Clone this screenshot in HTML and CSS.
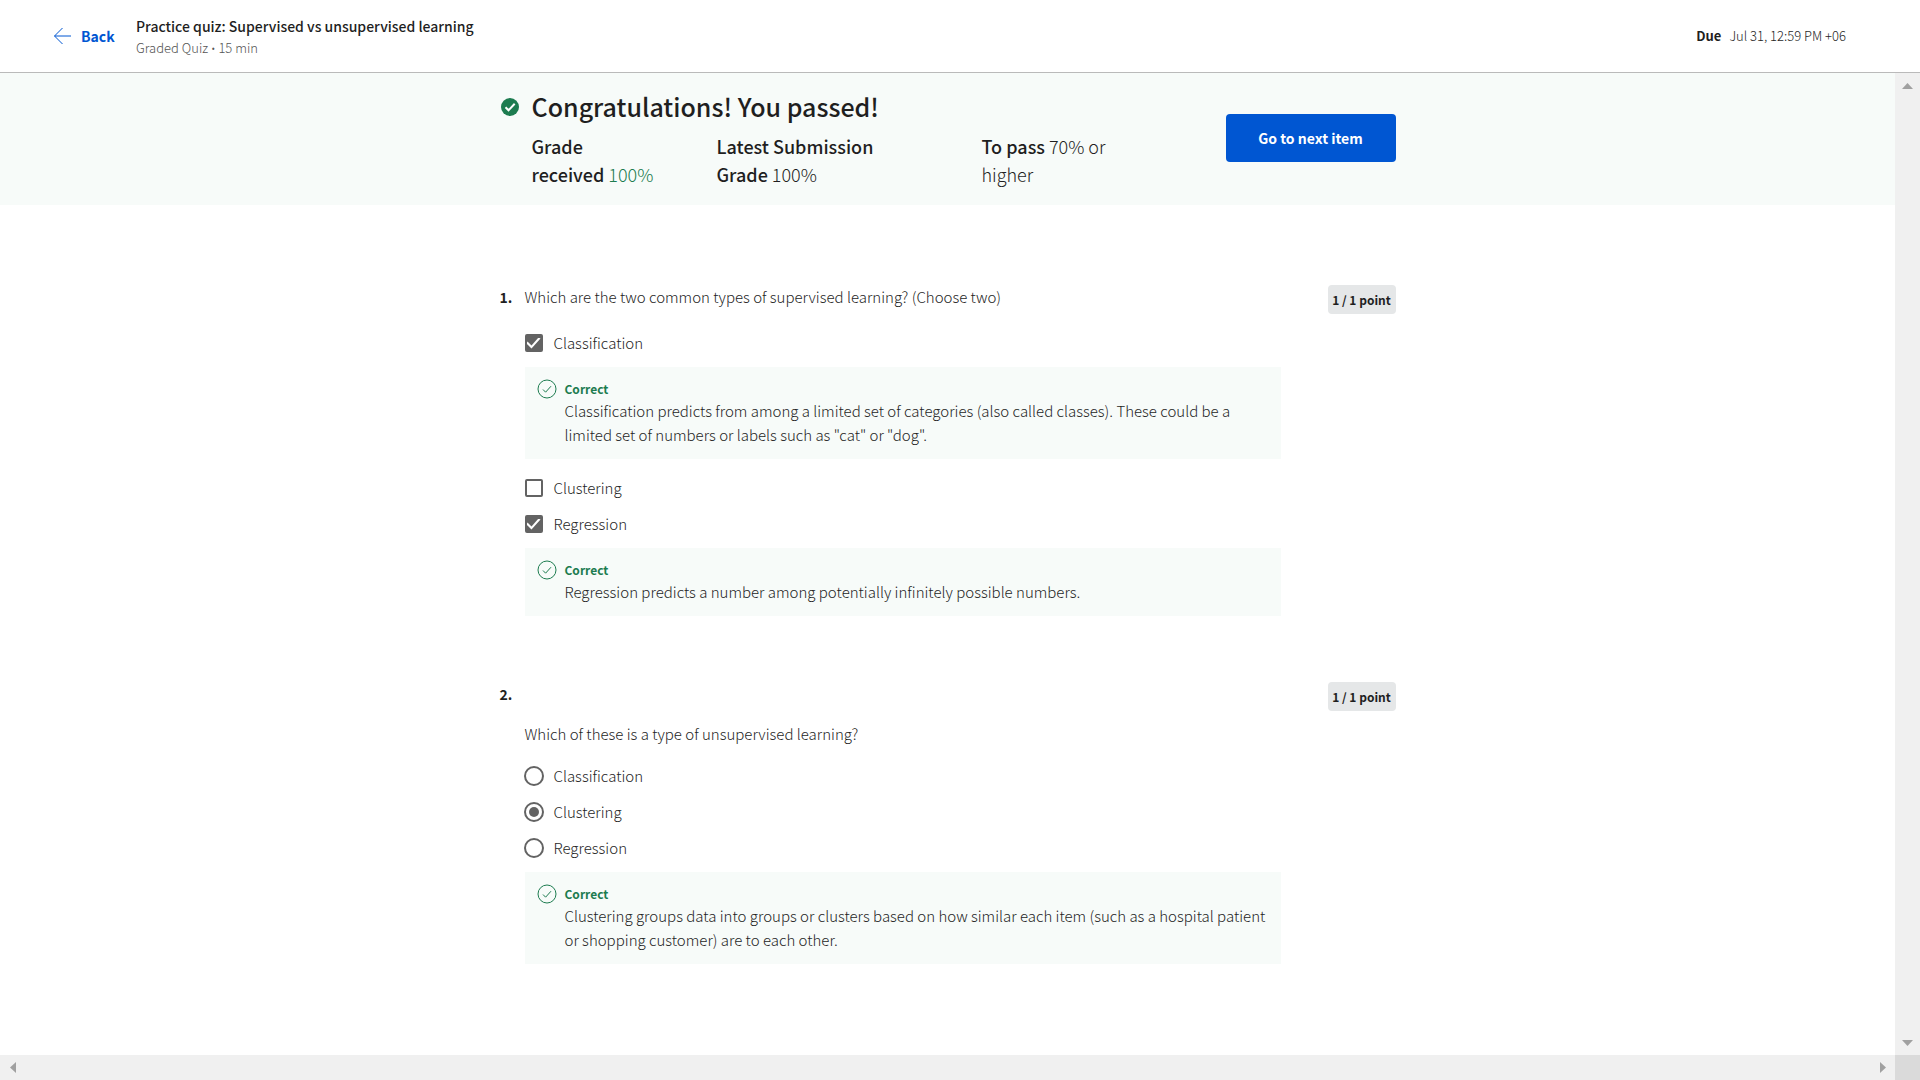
FILE: index.html
```html
<!DOCTYPE html>
<html lang="en">
<head>
<meta charset="utf-8">
<meta name="viewport" content="width=device-width, initial-scale=1">
<title>Practice quiz: Supervised vs unsupervised learning</title>
<link rel="stylesheet" href="styles.css">
</head>
<body>
<svg width="0" height="0" class="sprite" aria-hidden="true">
  <symbol id="check-outline" viewBox="0 0 20 20">
    <circle cx="10" cy="10" r="9" fill="none" stroke="currentColor"/>
    <path d="M6 10.5l2.6 2.7L14 7.2" fill="none" stroke="currentColor"/>
  </symbol>
</svg>
<div class="app">
  <header class="header">
    <a class="back" href="#">
      <svg width="18" height="18" viewBox="0 0 18 18" aria-hidden="true"><path d="M9.500 1L1.500 9l8 8M1.500 9H18" fill="none" stroke="currentColor"/></svg>
      Back
    </a>
    <div class="heading">
      <h1 class="title">Practice quiz: Supervised vs unsupervised learning</h1>
      <p class="meta">Graded Quiz <span class="dot">•</span> 15 min</p>
    </div>
    <p class="due"><strong>Due</strong><span>Jul 31, 12:59 PM +06</span></p>
  </header>

  <main class="content">
    <section class="banner">
      <div class="column banner-row">
        <svg class="banner-icon" width="18" height="18" viewBox="0 0 18 18" aria-hidden="true"><circle cx="9" cy="9" r="9" fill="#1d7c50"/><path d="M4.500 9.300l3 3 6.200-6.500" fill="none" stroke="#fff" stroke-width="2"/></svg>
        <div class="result">
          <h2 class="result-title">Congratulations! You passed!</h2>
          <div class="grades">
            <p class="grade"><b>Grade received</b>&nbsp;<span class="passed">100%</span></p>
            <p class="grade"><b>Latest Submission Grade</b>&nbsp;100%</p>
            <p class="grade"><b>To pass</b> 70% or higher</p>
          </div>
        </div>
        <button class="next" type="button">Go to next item</button>
      </div>
    </section>

    <div class="column questions">
      <section class="question">
        <span class="number">1.</span>
        <div class="body">
          <p class="prompt">Which are the two common types of supervised learning? (Choose two)</p>
          <div class="options">
            <label class="option"><input type="checkbox" checked><span>Classification</span></label>
            <div class="feedback">
              <svg class="feedback-icon" width="20" height="20" aria-hidden="true"><use href="#check-outline"/></svg>
              <div>
                <p class="verdict">Correct</p>
                <p>Classification predicts from among a limited set of categories (also called classes). These could be a limited set of numbers or labels such as "cat" or "dog".</p>
              </div>
            </div>
            <label class="option"><input type="checkbox"><span>Clustering</span></label>
            <label class="option"><input type="checkbox" checked><span>Regression</span></label>
            <div class="feedback">
              <svg class="feedback-icon" width="20" height="20" aria-hidden="true"><use href="#check-outline"/></svg>
              <div>
                <p class="verdict">Correct</p>
                <p>Regression predicts a number among potentially infinitely possible numbers.</p>
              </div>
            </div>
          </div>
        </div>
        <span class="points">1 / 1 point</span>
      </section>

      <section class="question">
        <span class="number">2.</span>
        <div class="body">
          <p class="prompt prompt-below">Which of these is a type of unsupervised learning?</p>
          <div class="options options-close">
            <label class="option"><input type="radio" name="q2"><span>Classification</span></label>
            <label class="option"><input type="radio" name="q2" checked><span>Clustering</span></label>
            <label class="option"><input type="radio" name="q2"><span>Regression</span></label>
            <div class="feedback">
              <svg class="feedback-icon" width="20" height="20" aria-hidden="true"><use href="#check-outline"/></svg>
              <div>
                <p class="verdict">Correct</p>
                <p>Clustering groups data into groups or clusters based on how similar each item (such as a hospital patient or shopping customer) are to each other.</p>
              </div>
            </div>
          </div>
        </div>
        <span class="points">1 / 1 point</span>
      </section>
    </div>
  </main>

  <div class="track track-vertical">
    <button class="arrow" type="button" aria-label="Scroll up"><svg width="11" height="6" viewBox="0 0 11 6"><path d="M0 6L5.500 0 11 6z"/></svg></button>
    <button class="arrow" type="button" aria-label="Scroll down"><svg width="11" height="6" viewBox="0 0 11 6"><path d="M0 0l5.500 6L11 0z"/></svg></button>
  </div>
  <div class="track">
    <button class="arrow" type="button" aria-label="Scroll left"><svg width="6" height="11" viewBox="0 0 6 11"><path d="M6 0L0 5.500 6 11z"/></svg></button>
    <button class="arrow" type="button" aria-label="Scroll right"><svg width="6" height="11" viewBox="0 0 6 11"><path d="M0 0l6 5.500L0 11z"/></svg></button>
  </div>
  <div class="corner"></div>
</div>
</body>
</html>
```
FILE: styles.css
```css
* {
  box-sizing: border-box;
}

body,
h1,
h2,
p {
  margin: 0;
}

body {
  background: #fff;
  color: #1f1f1f;
  font-family: "Noto Sans CJK SC", "Noto Sans", sans-serif;
  font-size: 15px;
  font-weight: 300;
  line-height: 24px;
}

svg {
  display: block;
}

.sprite {
  position: absolute;
}

button {
  border: 0;
  font-family: inherit;
  cursor: pointer;
}

.app {
  display: grid;
  grid-template-columns: minmax(0, 1fr) 25px;
  grid-template-rows: auto 1fr 25px;
  min-height: 100vh;
}

/* Header */

.header {
  grid-column: 1 / -1;
  display: flex;
  align-items: center;
  padding: 14px 74px 14px 53px;
  border-bottom: 1px solid #bababa;
}

.back {
  display: flex;
  align-items: center;
  gap: 10px;
  width: 83px;
  color: #0056d2;
  font-size: 14px;
  font-weight: 700;
  text-decoration: none;
}

.title {
  font-size: 14px;
  font-weight: 500;
  line-height: 24px;
}

.meta {
  color: #555;
  font-size: 13px;
  line-height: 20px;
}

.dot {
  font-family: "Noto Sans", sans-serif;
  font-size: 12px;
  line-height: 12px;
}

.due {
  display: flex;
  gap: 8px;
  margin-left: auto;
  font-size: 13px;
}

.due strong {
  font-weight: 700;
}

/* Result banner */

.column {
  width: 100%;
  max-width: 896px;
  margin: 0 auto;
}

.banner {
  padding: 15px 0 17px;
  background: #f7fbf9;
}

.banner-row {
  display: flex;
  align-items: center;
}

.banner-icon {
  align-self: flex-start;
  flex: none;
  margin: 10px 13px 0 1px;
}

.result {
  flex: 1;
}

.result-title {
  font-size: 25px;
  font-weight: 500;
  line-height: 36px;
}

.grades {
  display: grid;
  grid-template-columns: 185px 265px 160px;
  margin-top: 8px;
  font-size: 18px;
  line-height: 28px;
}

.grade {
  padding-right: 16px;
}

.grade:nth-child(2) {
  padding-right: 80px;
}

.grade b {
  font-weight: 500;
}

.passed {
  color: #1d7c50;
}

.next {
  width: 170px;
  height: 48px;
  border-radius: 4px;
  background: #0056d2;
  color: #fff;
  font-size: 14px;
  font-weight: 700;
}

/* Questions */

.questions {
  display: grid;
  gap: 66px;
  padding: 80px 0;
}

.question {
  display: grid;
  grid-template-columns: 25px minmax(0, 1fr) 115px;
  align-items: start;
}

.number {
  font-size: 14px;
  font-weight: 700;
}

.prompt-below {
  padding-top: 40px;
}

.points {
  justify-self: end;
  width: 68px;
  border-radius: 4px;
  background: #e5e7e8;
  font-size: 12px;
  font-weight: 700;
  line-height: 29px;
  text-align: center;
}

.options {
  margin-top: 16px;
}

.options-close {
  margin-top: 12px;
}

.option {
  display: grid;
  grid-template-columns: 18px auto;
  justify-content: start;
  align-items: center;
  gap: 11px;
  height: 36px;
}

.option input {
  display: grid;
  place-items: center;
  justify-self: center;
  appearance: none;
  width: 18px;
  height: 18px;
  margin: 0;
  border: 2px solid #636363;
  border-radius: 2px;
  background: #fff;
}

.option input[type="checkbox"]:checked {
  background: #636363;
}

.option input[type="checkbox"]:checked::before {
  content: "";
  width: 14px;
  height: 11px;
  background: #fff;
  clip-path: polygon(0 6px, 1px 4px, 5px 8px, 12px 0, 14px 1px, 5px 11px);
}

.option input[type="radio"] {
  width: 20px;
  height: 20px;
  border-radius: 50%;
}

.option input[type="radio"]:checked::before {
  content: "";
  width: 10px;
  height: 10px;
  border-radius: 50%;
  background: #636363;
}

.feedback {
  display: flex;
  gap: 8px;
  margin: 6px 0 11px;
  padding: 12px;
  background: #f7fbf9;
}

.feedback:last-child {
  margin-bottom: 0;
}

.feedback-icon {
  flex: none;
  color: #1d7c50;
}

.verdict {
  color: #1d7c50;
  font-size: 12px;
  font-weight: 700;
  line-height: 20px;
}

/* Scroll bars */

.track {
  display: flex;
  justify-content: space-between;
  background: #f0f0f0;
}

.track-vertical {
  flex-direction: column;
}

.arrow {
  display: grid;
  place-items: center;
  width: 25px;
  height: 25px;
  padding: 0;
  background: none;
  fill: #a0a0a0;
}

.corner {
  background: #dadada;
}
```
